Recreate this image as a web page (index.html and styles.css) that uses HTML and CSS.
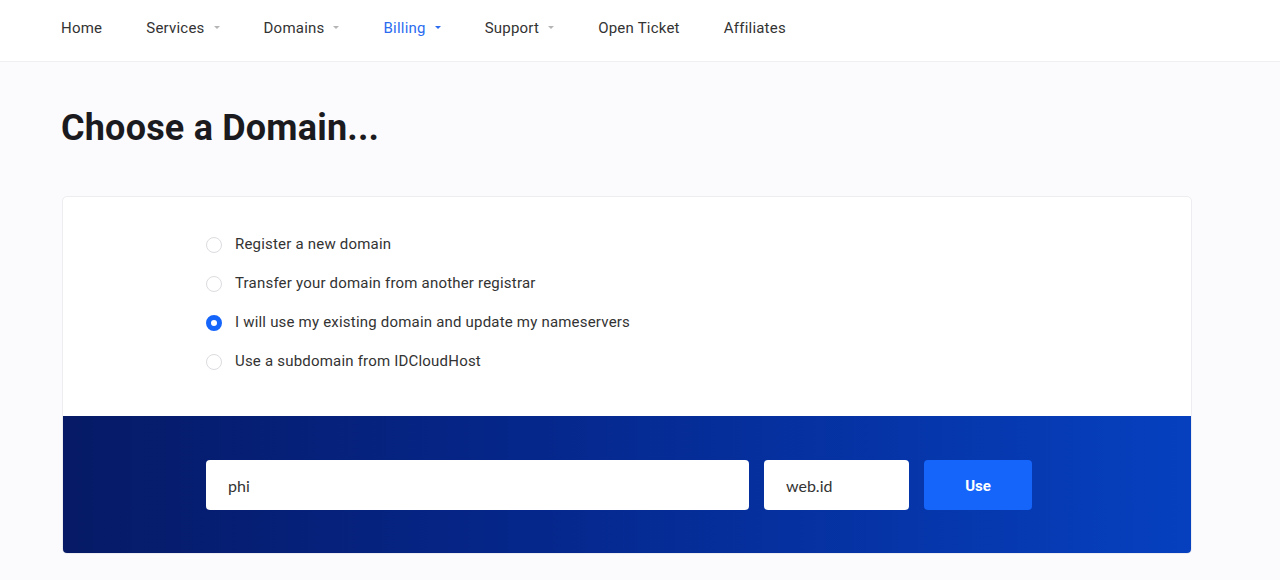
FILE: index.html
```html
<!DOCTYPE html>
<html lang="en">
<head>
  <meta charset="UTF-8" />
  <meta name="viewport" content="width=device-width, initial-scale=1" />
  <title>Choose a Domain</title>
  <link rel="stylesheet" href="styles.css">
</head>
<body>

  <!-- Top navigation -->
  <header class="topbar">
    <nav class="nav">
      <a href="#" class="nav-item">Home</a>
      <a href="#" class="nav-item">Services <span class="caret"></span></a>
      <a href="#" class="nav-item">Domains <span class="caret"></span></a>
      <a href="#" class="nav-item active">Billing <span class="caret"></span></a>
      <a href="#" class="nav-item">Support <span class="caret"></span></a>
      <a href="#" class="nav-item">Open Ticket</a>
      <a href="#" class="nav-item">Affiliates</a>
    </nav>
  </header>

  <main class="page">
    <h1 class="page-title">Choose a Domain...</h1>

    <div class="domain-card">
      <div class="options">
        <label class="option"><input type="radio" name="domainoption"><span class="radio"></span>Register a new domain</label>
        <label class="option"><input type="radio" name="domainoption"><span class="radio"></span>Transfer your domain from another registrar</label>
        <label class="option"><input type="radio" name="domainoption" checked><span class="radio"></span>I will use my existing domain and update my nameservers</label>
        <label class="option"><input type="radio" name="domainoption"><span class="radio"></span>Use a subdomain from IDCloudHost</label>
      </div>

      <div class="domain-form">
        <input type="text" class="field field-sld" value="phi">
        <input type="text" class="field field-tld" value="web.id">
        <button class="btn-use">Use</button>
      </div>
    </div>
  </main>

</body>
</html>
```

FILE: styles.css
```css
body {
  margin: 0;
  padding: 0;
  background: #fbfbfd;
  font-family: Roboto, 'Liberation Sans', sans-serif;
  color: #333;
}
.topbar {
  background: #fff;
  height: 62px;
  border-bottom: 1px solid #efeff3;
  box-sizing: border-box;
}
.nav {
  display: flex;
  align-items: center;
  height: 100%;
  padding-left: 61px;
  padding-bottom: 6px;
  box-sizing: border-box;
  gap: 44px;
}
.nav-item {
  font-size: 15px;
  color: #333;
  text-decoration: none;
  display: flex;
  align-items: center;
  letter-spacing: 0.22px;
}
.nav-item.active {
  color: #2a6bf0;
}
.caret {
  display: inline-block;
  width: 0;
  height: 0;
  margin-left: 9px;
  border-left: 3.5px solid transparent;
  border-right: 3.5px solid transparent;
  border-top: 3.5px solid #b5b5b8;
}
.nav-item.active .caret {
  border-top-color: #2a6bf0;
}
.page {
  padding: 0 88px 0 62px;
}
.page-title {
  margin: 44px 0 46px -1px;
  font-size: 36px;
  font-weight: 700;
  color: #1b1b1f;
  line-height: 44px;
  letter-spacing: 0.2px;
}
.domain-card {
  background: #fff;
  border: 1px solid #ededf1;
  border-radius: 5px;
  overflow: hidden;
}
.options {
  display: flex;
  flex-direction: column;
  gap: 18px;
  padding: 37px 0 44px 143px;
}
.option {
  display: flex;
  align-items: center;
  font-size: 15px;
  color: #333;
  line-height: 21px;
  letter-spacing: 0.2px;
  cursor: pointer;
}
.option input {
  display: none;
}
.radio {
  width: 16px;
  height: 16px;
  box-sizing: border-box;
  border: 1px solid #dcdce0;
  border-radius: 50%;
  margin-right: 13px;
  background: #fff;
}
.option input:checked + .radio {
  border: 5px solid #1565fb;
}
.domain-form {
  background: linear-gradient(90deg, #061a66 0%, #05268a 40%, #0640bf 100%);
  display: flex;
  gap: 15px;
  padding: 44px 0 43px 143px;
}
.field {
  height: 50px;
  box-sizing: border-box;
  border: none;
  border-radius: 4px;
  padding: 0 22px;
  font-family: Lato, 'Liberation Sans', sans-serif;
  font-size: 16px;
  color: #333;
  background: #fff;
  outline: none;
}
.field-sld {
  width: 543px;
}
.field-tld {
  width: 145px;
}
.btn-use {
  width: 108px;
  height: 50px;
  border: none;
  border-radius: 4px;
  background: #1565fb;
  color: #fff;
  font-family: Roboto, 'Liberation Sans', sans-serif;
  font-weight: 700;
  font-size: 15px;
  padding-top: 2px;
  cursor: pointer;
}
```
